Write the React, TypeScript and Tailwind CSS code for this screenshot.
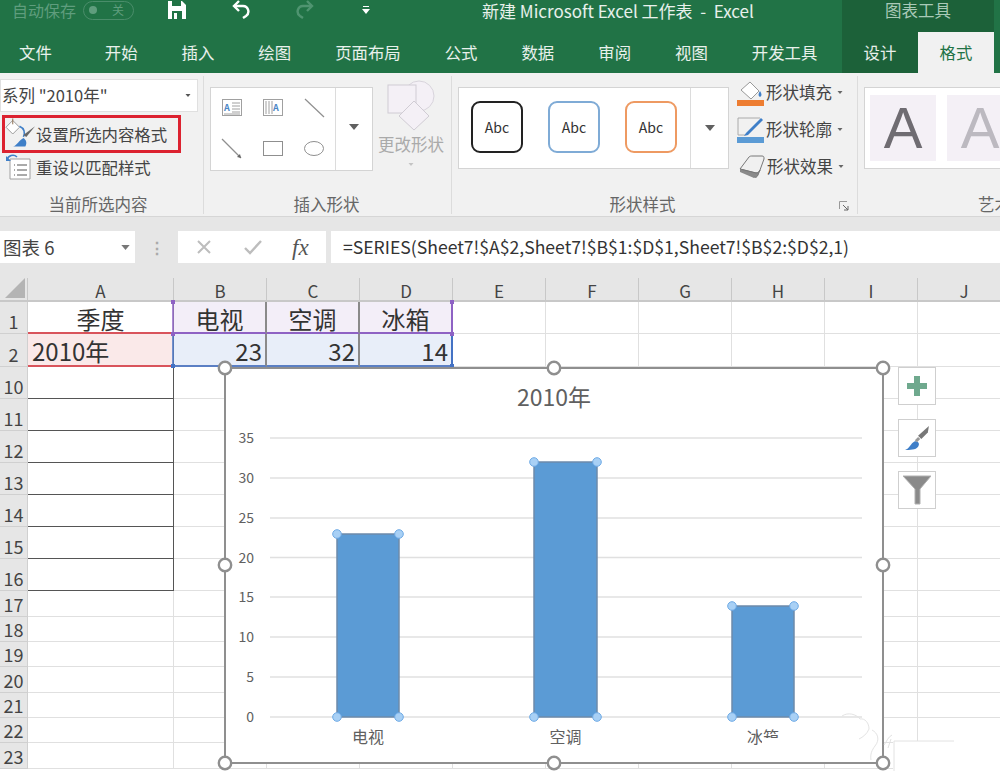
const tabs = ['开始', '插入', '绘图', '页面布局', '公式', '数据', '审阅', '视图', '开发工具']
const columns = ['A', 'B', 'C', 'D', 'E', 'F', 'G', 'H', 'I', 'J']
const rows = [
  { n: '1', h: 32 }, { n: '2', h: 33 }, { n: '10', h: 32 }, { n: '11', h: 32 }, { n: '12', h: 32 },
  { n: '13', h: 32 }, { n: '14', h: 32 }, { n: '15', h: 32 }, { n: '16', h: 32 }, { n: '17', h: 26 },
  { n: '18', h: 25 }, { n: '19', h: 25 }, { n: '20', h: 26 }, { n: '21', h: 25 }, { n: '22', h: 25 }, { n: '23', h: 26 },
]

function cellClass(r: number, c: number) {
  const base = 'flex items-center pt-[3px] text-[24px] leading-none text-[#333] '
  if (r === 0 && c === 0) return base + 'justify-center bg-white border-r border-r-[#8a8a8a] border-b-2 border-b-[#d9545c]'
  if (r === 0 && c >= 1 && c <= 3)
    return base + 'justify-center bg-[#f3eef8] border-b-2 border-b-[#8e62c4] border-r-2 ' + (c === 3 ? 'border-r-[#8e62c4]' : 'border-r-[#8a8a8a]')
  if (r === 1 && c === 0) return base + 'bg-[#fae9e9] pl-[4px] border-b-2 border-b-[#d9545c] border-r border-r-[#8a8a8a]'
  if (r === 1 && c >= 1 && c <= 3)
    return base + 'justify-end pr-[3px] bg-[#e8eef9] border-b-2 border-b-[#5b7fc4] border-r-2 ' + (c === 3 ? 'border-r-[#4472c4]' : 'border-r-[#8a8a8a]')
  if (r >= 2 && r <= 8 && c === 0) return base + 'bg-white border-r border-b border-[#555]'
  return base + 'bg-white border-r border-b border-[#e0e0e0]'
}

const cellText: Record<string, string> = {
  '0-0': '季度', '0-1': '电视', '0-2': '空调', '0-3': '冰箱',
  '1-0': '2010年', '1-1': '23', '1-2': '32', '1-3': '14',
}

function Caret({ className }: { className: string }) {
  return (
    <svg viewBox="0 0 10 6" className={className}>
      <path d="M0 0h10L5 6z" fill="currentColor" />
    </svg>
  )
}

function ShapeGallery() {
  return (
    <div className="ml-[6px] mt-[11px] flex h-[84px] w-[163px] border border-[#d4d4d4] bg-white">
      <svg viewBox="0 0 124 82" className="h-[82px] w-[124px]">
        <rect x="11.5" y="11.5" width="19" height="16" fill="#fff" stroke="#a0a0a0" />
        <text x="13" y="23" fontSize="9" fontWeight="700" fill="#4a86c5">A</text>
        <path d="M21 15h8M21 18h8M21 21h8M21 24h8M13 26h16" stroke="#a0a0a0" />
        <rect x="52.5" y="11.5" width="19" height="16" fill="#fff" stroke="#a0a0a0" />
        <text x="62" y="23" fontSize="9" fontWeight="700" fill="#4a86c5">A</text>
        <path d="M55 13v13M58 13v13M61 13v13" stroke="#a0a0a0" />
        <path d="M94 11l19 18" stroke="#8f8f8f" strokeWidth="1.2" />
        <path d="M11 51l19 19" stroke="#8f8f8f" strokeWidth="1.2" />
        <path d="M26 69l4 1-1-4z" fill="#666" />
        <rect x="52.5" y="53.5" width="19" height="14" fill="#fff" stroke="#8f8f8f" />
        <ellipse cx="103" cy="60.5" rx="9.5" ry="7" fill="#fff" stroke="#8f8f8f" />
      </svg>
      <div className="flex flex-1 items-center justify-center border-l border-[#dcdcdc] pb-[4px] text-[#606060]">
        <Caret className="h-[6px] w-[10px]" />
      </div>
    </div>
  )
}

function AbcGallery() {
  const styles = ['border-[#222]', 'border-[#7fabd6]', 'border-[#ee9a62]']
  return (
    <div className="ml-[6px] mt-[11px] flex h-[82px] w-[271px] border border-[#d4d4d4] bg-white">
      <div className="flex flex-1 items-center gap-[25px] pb-[2px] pl-[12px]">
        {styles.map((s, i) => (
          <div key={i} className={`flex h-[52px] w-[52px] items-center justify-center rounded-[9px] border-2 bg-white text-[14px] text-[#333] ${s}`}>Abc</div>
        ))}
      </div>
      <div className="flex w-[38px] items-center justify-center border-l border-[#dcdcdc] text-[#606060]">
        <Caret className="h-[6px] w-[10px]" />
      </div>
    </div>
  )
}

function ShapeButton({ label, icon, pl }: { label: string; icon: React.ReactNode; pl: string }) {
  return (
    <div className={`flex h-[37px] items-center ${pl}`}>
      {icon}
      <span className="text-[16.5px] leading-none text-[#444]">{label}</span>
      <Caret className="ml-[5px] h-[3px] w-[6px] text-[#666]" />
    </div>
  )
}

function Ribbon() {
  return (
    <div className="flex h-[144px] overflow-hidden border-b border-[#d6d6d6] bg-[#f1f1f1]">
      <div className="mb-[2px] mt-[3px] flex w-[204px] shrink-0 flex-col border-r border-[#dcdcdc]">
        <div className="mt-[3px] flex h-[33px] w-[198px] items-center justify-between border border-[#e0e0e0] bg-white pl-[1px] pr-[6px] text-[16.5px] text-[#444]">
          <span>系列 "2010年"</span>
          <Caret className="h-[3px] w-[6px] text-[#555]" />
        </div>
        <div className="ml-[2px] mt-[3px] flex h-[38px] w-[179px] items-center border-[3px] border-[#dc2230]">
          <svg viewBox="0 0 32 32" className="h-[32px] w-[31px] shrink-0">
            <path d="M8 2l7 7-7 7-7-7z" fill="#fff" stroke="#9a9a9a" />
            <path d="M8 0v6" stroke="#8a6a4a" />
            <path d="M15 8c5 2 6 7 4 11" fill="none" stroke="#3f7fc8" strokeWidth="1.6" />
            <path d="M31 8l-9 11-3-2z" fill="#666" />
            <path d="M8 29c4-1 7-7 11-9 3 2 4 5 2 9z" fill="#3f7fc8" />
          </svg>
          <span className="text-[16.4px] leading-none text-[#444]">设置所选内容格式</span>
        </div>
        <div className="flex h-[28px] items-center pl-[5px]">
          <svg viewBox="0 0 26 28" className="h-[28px] w-[26px] shrink-0">
            <path d="M5 6h20v20H5z" fill="#fff" stroke="#a0a0a0" />
            <path d="M9 12h1M9 17h1M9 22h1M12 12h10M12 17h10M12 22h10" stroke="#555" />
            <path d="M2 7a6 6 0 0 1 10-3" fill="none" stroke="#3f7fc8" strokeWidth="1.6" />
            <path d="M1 3v5h5z" fill="#3f7fc8" />
          </svg>
          <span className="ml-[5px] text-[16.4px] leading-none text-[#444]">重设以匹配样式</span>
        </div>
        <div className="mt-auto pr-[7px] text-center text-[16.5px] leading-[20px] text-[#666]">当前所选内容</div>
      </div>

      <div className="mb-[2px] mt-[3px] flex w-[248px] shrink-0 flex-col border-r border-[#dcdcdc]">
        <div className="flex">
          <ShapeGallery />
          <div className="ml-[4px] flex w-[68px] flex-col items-center">
            <svg viewBox="0 0 52 52" className="mt-[3px] h-[52px] w-[52px]">
              <circle cx="34" cy="17" r="15" fill="#f4f0f6" stroke="#d8d4dc" />
              <rect x="3" y="6" width="28" height="28" fill="#f4f0f6" stroke="#d0ccd4" />
              <path d="M29 22l15 15-15 14-15-14z" fill="#f4f0f6" stroke="#d0ccd4" />
            </svg>
            <span className="mt-[5px] text-[16.5px] leading-none text-[#aaa]">更改形状</span>
            <Caret className="mt-[10px] h-[3px] w-[6px] text-[#c4c4c4]" />
          </div>
        </div>
        <div className="mt-auto pr-[2px] text-center text-[16.5px] leading-[20px] text-[#666]">插入形状</div>
      </div>

      <div className="relative mb-[2px] mt-[3px] flex w-[406px] shrink-0 flex-col border-r border-[#dcdcdc]">
        <div className="flex">
          <AbcGallery />
          <div className="-mt-[2px] flex flex-col">
            <ShapeButton
              label="形状填充"
              pl="pl-[8px]"
              icon={
                <svg viewBox="0 0 28 28" className="mr-[1px] h-[28px] w-[28px] shrink-0">
                  <path d="M4 11l9-8 9 9-8 8z" fill="#fff" stroke="#999" />
                  <path d="M23 12c2 3 2 5 0 6-2-1-2-3 0-6z" fill="#3f7fc8" />
                  <rect x="0" y="21" width="27" height="6" fill="#ed7d31" />
                </svg>
              }
            />
            <ShapeButton
              label="形状轮廓"
              pl="pl-[8px]"
              icon={
                <svg viewBox="0 0 28 28" className="mr-[1px] h-[28px] w-[28px] shrink-0">
                  <path d="M1 2h22M1 2v17h7" fill="none" stroke="#aaa" />
                  <path d="M9 17L24 2l2 2-15 15-4 1z" fill="#3f7fc8" />
                  <rect x="0" y="21" width="27" height="6" fill="#5b9bd5" />
                </svg>
              }
            />
            <ShapeButton
              label="形状效果"
              pl="pl-[9px]"
              icon={
                <svg viewBox="0 0 28 24" className="mr-[1px] h-[24px] w-[28px] shrink-0">
                  <path d="M2 14L11 2c1-1 2-1 3-1h10c2 0 2 1 2 3l-4 11c-1 2-2 3-4 3z" fill="#f0f0f0" stroke="#777" />
                  <path d="M2 14l14 8c2 1 3 0 4-2l2-5c-1 2-2 3-4 3L2 14z" fill="#8a8a8a" stroke="#777" />
                  <path d="M2 14v3l14 6v-3z" fill="#8a8a8a" />
                </svg>
              }
            />
          </div>
        </div>
        <div className="mt-auto pr-[24px] text-center text-[16.5px] leading-[20px] text-[#666]">形状样式</div>
        <svg viewBox="0 0 10 10" className="absolute bottom-[3px] right-[8px] h-[10px] w-[10px]">
          <path d="M0.5 8V0.5H8" fill="none" stroke="#999" />
          <path d="M4 4l5 5M9 5v4H5" fill="none" stroke="#666" />
        </svg>
      </div>

      <div className="mb-[2px] mt-[3px] flex flex-1 flex-col">
        <div className="ml-[6px] mt-[11px] flex h-[82px] gap-[11px] border border-r-0 border-[#d4d4d4] bg-white pl-[5px] pt-[7px] font-['Liberation_Sans',sans-serif]">
          <div className="flex h-[66px] w-[66px] shrink-0 items-center justify-center bg-[#f4f0f6] text-[58px] leading-none text-[#6f6c72]">A</div>
          <div className="flex h-[66px] w-[66px] shrink-0 items-center justify-center bg-[#f4f0f6] text-[58px] leading-none text-[#bcb9c0]">A</div>
        </div>
        <div className="mt-auto pl-[120px] text-[16.5px] leading-[20px] text-[#666]">艺术</div>
      </div>
    </div>
  )
}

function FormulaBar() {
  return (
    <div className="flex h-[61px] items-start bg-[#e6e6e6] pt-[14px]">
      <div className="flex h-[32px] w-[135px] items-center justify-between bg-white pl-[3px] pr-[5px] text-[18.5px] leading-none text-[#444]">
        <span>图表 6</span>
        <Caret className="h-[5px] w-[9px] text-[#777]" />
      </div>
      <div className="flex h-[32px] w-[43px] items-center justify-center text-[16px] font-bold leading-none text-[#aaa]">⋮</div>
      <div className="flex h-[32px] w-[148px] items-center bg-white pl-[18px]">
        <svg viewBox="0 0 16 16" className="h-[16px] w-[16px]">
          <path d="M2 2l12 12M14 2L2 14" stroke="#bdbdbd" strokeWidth="2" />
        </svg>
        <svg viewBox="0 0 18 16" className="ml-[32px] h-[16px] w-[18px]">
          <path d="M1 9l5 5L17 2" fill="none" stroke="#bdbdbd" strokeWidth="2.4" />
        </svg>
        <span className="ml-[30px] font-['Liberation_Serif',serif] text-[23px] italic leading-none text-[#555]">fx</span>
      </div>
      <div className="ml-[5px] flex h-[32px] flex-1 items-center whitespace-nowrap bg-white pl-[12px] text-[17.6px] leading-none text-[#333]">
        =SERIES(Sheet7!$A$2,Sheet7!$B$1:$D$1,Sheet7!$B$2:$D$2,1)
      </div>
    </div>
  )
}

function Sheet() {
  return (
    <div
      className="grid"
      style={{
        gridTemplateColumns: '28px 146px repeat(9, 93px)',
        gridTemplateRows: '24px ' + rows.map(r => r.h + 'px').join(' '),
      }}
    >
      <div className="flex items-end justify-end border-b-2 border-r border-[#c8c8c8] bg-[#e6e6e6] p-[2px]">
        <div className="h-0 w-0 border-b-[20px] border-l-[20px] border-b-[#b4b4b4] border-l-transparent" />
      </div>
      {columns.map(c => (
        <div key={c} className="flex items-center justify-center border-b-2 border-r border-[#c8c8c8] bg-[#e6e6e6] pt-[2px] text-[17px] leading-none text-[#444]">
          {c}
        </div>
      ))}
      {rows.map((row, r) => (
        <div key={row.n} className="contents">
          <div className="flex items-end justify-center border-b border-r border-[#d0d0d0] bg-[#e6e6e6] pb-[3px] text-[18px] leading-none text-[#444]">
            {row.n}
          </div>
          {columns.map((_, c) => (
            <div key={c} className={cellClass(r, c)}>{cellText[`${r}-${c}`]}</div>
          ))}
        </div>
      ))}
    </div>
  )
}

const axis = [[0, 717], [5, 677], [10, 637], [15, 597], [20, 557.5], [25, 518], [30, 478], [35, 438]]
const bars = [
  { x: 337, w: 62, top: 534, label: '电视' },
  { x: 534, w: 63, top: 462, label: '空调' },
  { x: 732, w: 62, top: 606, label: '冰箱' },
]
const handles = [[225, 368], [554, 368], [883, 368], [225, 565], [883, 565], [225, 763], [554, 763], [883, 763]]
const rangeMarks = [
  [173, 302, '#8e62c4'], [452, 302, '#8e62c4'], [173, 334, '#8e62c4'], [452, 334, '#8e62c4'],
  [173, 366, '#4472c4'], [452, 366, '#4472c4'],
] as const

// svg uses page coordinates so the numbers can be read straight off the screenshot
function Chart() {
  return (
    <svg viewBox="0 278 1000 493" className="absolute left-0 top-0 h-[493px] w-[1000px]">
      <path d="M173 302V334" fill="none" stroke="#8e62c4" strokeWidth="1.5" />
      <path d="M173 334V366" fill="none" stroke="#4472c4" strokeWidth="1.5" />
      {rangeMarks.map(([x, y, color]) => (
        <rect key={`${x}-${y}`} x={x - 2} y={y - 2} width="4" height="4" fill={color} />
      ))}
      <rect x="225" y="368" width="658" height="395" fill="#fff" stroke="#8f8f8f" strokeWidth="2" />
      <text x="554" y="406" textAnchor="middle" fontSize="23" fill="#606060">2010年</text>
      {axis.map(([v, y]) => (
        <g key={v}>
          <path d={`M270 ${y}H862`} stroke="#e0e0e0" strokeWidth="1.5" />
          <text x="254" y={y + 5} textAnchor="end" fontSize="14" fill="#606060">{v}</text>
        </g>
      ))}
      {bars.map(b => (
        <g key={b.label}>
          <rect x={b.x} y={b.top} width={b.w} height={717 - b.top} fill="#5b9bd5" stroke="#6d8baa" strokeWidth="1.5" />
          <text x={b.x + b.w / 2} y="743" textAnchor="middle" fontSize="16" fill="#606060">{b.label}</text>
          {[[b.x, b.top], [b.x + b.w, b.top], [b.x, 717], [b.x + b.w, 717]].map(([x, y], i) => (
            <circle key={i} cx={x} cy={y} r="4.3" fill="#a8d0f5" stroke="#6eaae6" />
          ))}
        </g>
      ))}
      {/* watermark patch from the source image */}
      <path d="M762 738h70c6-8 20-12 28-6 5 5 6 14 2 24H762z" fill="#fff" />
      <path d="M842 716c6-4 14-2 18 3 5-1 9 4 9 10-2 5-6 8-10 10M872 730c6 3 8 10 3 16-3 4-5 8-4 14" fill="none" stroke="#e4e4e4" />
      <path d="M893 741h107v30H893z" fill="#fff" />
      <path d="M894 741v30M894 741h60M884 745c3-4 4-8 8-10M888 748l3-9" fill="none" stroke="#e2e2e2" />
      {handles.map(([x, y]) => (
        <circle key={`${x}-${y}`} cx={x} cy={y} r="6.2" fill="#fff" stroke="#8f8f8f" strokeWidth="2.4" />
      ))}
    </svg>
  )
}

function SideButtons() {
  return (
    <div className="absolute left-[898px] top-[89px] flex flex-col gap-[14px]">
      <div className="flex h-[38px] w-[38px] items-center justify-center border border-[#cfcfcf] bg-white">
        <svg viewBox="0 0 20 20" className="h-[20px] w-[20px]">
          <path d="M7 0h6v7h7v6h-7v7H7v-7H0V7h7z" fill="#6fa98e" />
        </svg>
      </div>
      <div className="flex h-[38px] w-[38px] items-center justify-center border border-[#cfcfcf] bg-white">
        <svg viewBox="0 0 24 24" className="h-[26px] w-[26px]">
          <path d="M23 1l-1 6-6 6-3-3z" fill="#777" />
          <path d="M1 23c4-1 5-6 9-8 3 0 5 2 3 5-2 3-8 3-12 3z" fill="#3f7fc8" />
          <path d="M10 14l3-3 2 2-3 3z" fill="#999" />
        </svg>
      </div>
      <div className="flex h-[38px] w-[38px] items-center justify-center border border-[#cfcfcf] bg-white">
        <svg viewBox="0 0 28 30" className="h-[30px] w-[28px]">
          <path d="M0 1h28L17 14v15h-5V14z" fill="#8a8a8a" stroke="#b0b0b0" />
        </svg>
      </div>
    </div>
  )
}

export default function App() {
  return (
    <div className="h-[771px] w-[1000px] overflow-hidden bg-white font-['Noto_Sans_CJK_SC','Noto_Sans',sans-serif]">
      <div className="relative h-[73px] bg-[#217346]">
        <div className="flex h-[20px] items-center">
          <span className="ml-[12px] text-[16px] leading-none text-[#5f9d7d]">自动保存</span>
          <div className="ml-[7px] flex h-[19px] w-[51px] items-center justify-between rounded-full border border-[#4a8d6a] pl-[5px] pr-[9px] text-[12px] leading-none text-[#5f9d7d]">
            <span className="h-[8px] w-[8px] rounded-full bg-[#5f9d7d]" />
            <span>关</span>
          </div>
          <svg viewBox="0 0 18 18" className="ml-[34px] h-[18px] w-[18px]">
            <path d="M0 0h14l4 4v14H0z" fill="#fff" />
            <path d="M4 0h9v5H4z" fill="#217346" />
            <path d="M4 10h10v8H4z" fill="#217346" />
            <path d="M6 12h3v6H6z" fill="#fff" />
          </svg>
          <svg viewBox="0 0 18 20" className="ml-[46px] h-[20px] w-[18px]">
            <path d="M7 1L2 6l5 5" fill="none" stroke="#fff" strokeWidth="2.4" />
            <path d="M2 6h9a5.5 5.5 0 0 1 3 10l-3 2" fill="none" stroke="#fff" strokeWidth="2.4" />
          </svg>
          <svg viewBox="0 0 18 20" className="ml-[46px] h-[20px] w-[18px]">
            <path d="M11 1l5 5-5 5" fill="none" stroke="#4f9470" strokeWidth="2.4" />
            <path d="M16 6H7a5.5 5.5 0 0 0-3 10l3 2" fill="none" stroke="#4f9470" strokeWidth="2.4" />
          </svg>
          <svg viewBox="0 0 8 8" className="ml-[48px] h-[8px] w-[8px]">
            <path d="M1 0h6v1H1zM0 3h8L4 8z" fill="#fff" />
          </svg>
          <span className="ml-[112px] w-[360px] whitespace-pre text-[17px] leading-none text-white/90">新建 Microsoft Excel 工作表  -  Excel</span>
        </div>
        <div className="mt-[12px] flex h-[41px] items-center text-[16.4px] leading-none text-white/90">
          <span className="ml-[19px] mr-[53px]">文件</span>
          <div className="flex items-center gap-[44px]">
            {tabs.map(t => <span key={t}>{t}</span>)}
          </div>
        </div>
        {/* contextual tabs sit over the right end of the title bar */}
        <div className="absolute left-[842px] top-0 flex h-[73px] w-[152px] flex-col bg-[#1c6139]">
          <div className="flex h-[32px] justify-center pt-[2px] text-[16.5px] leading-none text-[#a9c9b7]">图表工具</div>
          <div className="flex h-[41px] items-center text-[16.4px] leading-none">
            <span className="w-[76px] text-center text-white/90">设计</span>
            <span className="flex h-full w-[76px] items-center justify-center bg-[#f1f1f1] text-[#217346]">格式</span>
          </div>
        </div>
      </div>
      <Ribbon />
      <FormulaBar />
      <div className="relative h-[493px] overflow-hidden">
        <Sheet />
        <Chart />
        <SideButtons />
      </div>
    </div>
  )
}
